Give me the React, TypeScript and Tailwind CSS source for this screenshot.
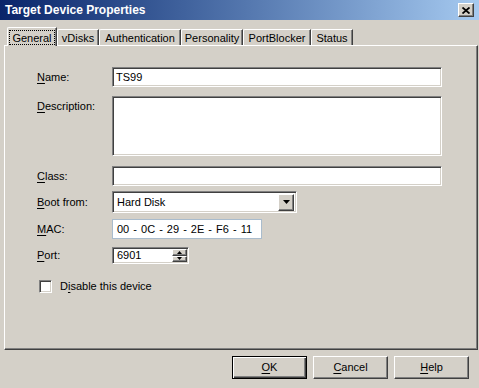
import { ReactNode } from 'react';

const sunken =
  'border border-t-[#808080] border-l-[#808080] border-b-white border-r-white shadow-[inset_1px_1px_0_#404040,inset_-1px_-1px_0_#d4d0c8] bg-white';
const raised =
  'border border-t-white border-l-white border-r-[#404040] border-b-[#404040] shadow-[inset_-1px_-1px_0_#808080] bg-[#d4d0c8]';

function Label({ pre, u, rest }: { pre?: string; u: string; rest: string }) {
  return (
    <span className="whitespace-pre">
      {pre}
      <span className="underline underline-offset-[2px]">{u}</span>
      {rest}
    </span>
  );
}

function Row({ label, children, top, className }: { label: ReactNode; children: ReactNode; top?: boolean; className?: string }) {
  return (
    <div className={`flex ${top ? 'items-start' : 'items-center'} ${className ?? ''}`}>
      <div className={`w-[75px] shrink-0 ${top ? 'pt-[4px]' : ''}`}>{label}</div>
      {children}
    </div>
  );
}

const tabs = [
  { name: 'vDisks', w: 'w-[42px]' },
  { name: 'Authentication', w: 'w-[82px]' },
  { name: 'Personality', w: 'w-[62px]' },
  { name: 'PortBlocker', w: 'w-[68px]' },
  { name: 'Status', w: 'w-[42px]' },
];

export default function App() {
  return (
    <div className="w-[479px] h-[388px] bg-[#d4d0c8] flex flex-col overflow-hidden text-[11px] leading-[13px] text-black font-['Liberation_Sans',Arial,sans-serif]">
      {/* title bar */}
      <div className="h-[20px] shrink-0 flex items-center pl-[5px] pr-[5px] bg-gradient-to-r from-[#0a246a] to-[#a6caf0]">
        <span className="text-white font-bold text-[12px] leading-[14px]">Target Device Properties</span>
        <div className={`ml-auto w-[16px] h-[14px] flex items-center justify-center ${raised}`}>
          <svg width="8" height="7" viewBox="0 0 8 7">
            <path d="M0.5 0.5 L7.5 6.5 M7.5 0.5 L0.5 6.5" stroke="#000" strokeWidth="1.8" />
          </svg>
        </div>
      </div>

      {/* tabs */}
      <div className="pt-[7px] pl-[4px]">
        <div className="h-[19px] -mb-px relative z-10 flex items-end pl-[3px]">
          <div className="w-[50px] h-full bg-[#d4d0c8] border-l border-t border-white rounded-tl-[2px] shadow-[inset_-1px_0_0_#808080] border-r border-r-[#404040] flex items-start justify-center pt-[2px]">
            <span className="border border-dotted border-black px-[2px] leading-[12px] pt-px">General</span>
          </div>
          {tabs.map((t) => (
            <div
              key={t.name}
              className={`${t.w} h-[16px] mb-px bg-[#d4d0c8] border-l border-t border-white rounded-tl-[2px] border-r border-r-[#404040] shadow-[inset_-1px_0_0_#808080] flex items-center justify-center pt-px`}
            >
              {t.name}
            </div>
          ))}
        </div>

        {/* panel */}
        <div className="w-[474px] h-[305px] border-l border-t border-white border-r border-b border-r-[#404040] border-b-[#404040] shadow-[inset_-1px_-1px_0_#808080] pl-[32px] pt-[21px] flex flex-col">
          <Row label={<Label u="N" rest="ame:" />}>
            <div className={`w-[330px] h-[20px] ${sunken} flex items-center pl-[3px]`}>TS99</div>
          </Row>
          <Row label={<Label u="D" rest="escription:" />} top className="mt-[9px]">
            <div className={`w-[330px] h-[60px] ${sunken}`} />
          </Row>
          <Row label={<Label u="C" rest="lass:" />} className="mt-[10px]">
            <div className={`w-[330px] h-[20px] ${sunken}`} />
          </Row>
          <Row label={<Label u="B" rest="oot from:" />} className="mt-[5px]">
            <div className={`w-[185px] h-[22px] ${sunken} flex items-center pl-[4px] pr-[2px]`}>
              <span>Hard Disk</span>
              <div className={`ml-auto w-[16px] h-[17px] ${raised} flex items-center justify-center`}>
                <svg width="7" height="4" viewBox="0 0 7 4"><path d="M0 0 L7 0 L3.5 4 Z" fill="#000" /></svg>
              </div>
            </div>
          </Row>
          <Row label={<Label u="M" rest="AC:" />} className="mt-[6px]">
            <div className="w-[150px] h-[20px] bg-white border border-[#a9bccd] flex items-center pl-[4px] whitespace-pre [word-spacing:1px]">
              {'00 - 0C - 29 - 2E - F6 - 11'}
            </div>
          </Row>
          <Row label={<Label u="P" rest="ort:" />} className="mt-[8px]">
            <div className={`w-[77px] h-[17px] ${sunken} flex items-center pl-[4px] pr-[1px]`}>
              <span>6901</span>
              <div className="ml-auto flex flex-col h-[13px] w-[15px]">
                <div className={`flex-1 ${raised} flex items-center justify-center`}>
                  <svg width="5" height="3" viewBox="0 0 5 3"><path d="M2.5 0 L5 3 L0 3 Z" fill="#000" /></svg>
                </div>
                <div className={`flex-1 ${raised} flex items-center justify-center`}>
                  <svg width="5" height="3" viewBox="0 0 5 3"><path d="M0 0 L5 0 L2.5 3 Z" fill="#000" /></svg>
                </div>
              </div>
            </div>
          </Row>
          <div className="mt-[16px] pl-[2px] flex items-center gap-[8px]">
            <div className={`w-[13px] h-[13px] ${sunken}`} />
            <Label pre="D" u="i" rest="sable this device" />
          </div>
        </div>
      </div>

      {/* buttons */}
      <div className="flex justify-end gap-[6px] pr-[10px] pt-[6px]">
        <div className="w-[75px] h-[23px] border border-black shadow-[inset_1px_1px_0_white,inset_-1px_-1px_0_#404040,inset_-2px_-2px_0_#808080] flex items-center justify-center">
          <Label u="O" rest="K" />
        </div>
        <div className={`w-[75px] h-[23px] ${raised} flex items-center justify-center`}>
          <Label u="C" rest="ancel" />
        </div>
        <div className={`w-[75px] h-[23px] ${raised} flex items-center justify-center`}>
          <Label u="H" rest="elp" />
        </div>
      </div>
    </div>
  );
}
